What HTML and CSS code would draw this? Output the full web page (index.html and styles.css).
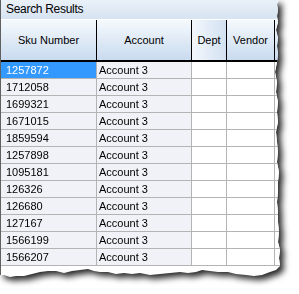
FILE: index.html
```html
<!DOCTYPE html>
<html>
<head>
<meta charset="utf-8">
<link rel="stylesheet" href="styles.css">
</head>
<body>
<div class="shadow">
  <div class="frame">
    <div class="title">Search Results</div>
    <div class="grid">
      <div class="hd">Sku Number</div>
      <div class="hd">Account</div>
      <div class="hd sorted">Dept</div>
      <div class="hd">Vendor</div>
      <div class="hd last"></div>

      <div class="c sku sel">1257872</div><div class="c acc">Account 3</div><div class="c"></div><div class="c"></div><div class="c last"></div>
      <div class="c sku">1712058</div><div class="c acc">Account 3</div><div class="c"></div><div class="c"></div><div class="c last"></div>
      <div class="c sku">1699321</div><div class="c acc">Account 3</div><div class="c"></div><div class="c"></div><div class="c last"></div>
      <div class="c sku">1671015</div><div class="c acc">Account 3</div><div class="c"></div><div class="c"></div><div class="c last"></div>
      <div class="c sku">1859594</div><div class="c acc">Account 3</div><div class="c"></div><div class="c"></div><div class="c last"></div>
      <div class="c sku">1257898</div><div class="c acc">Account 3</div><div class="c"></div><div class="c"></div><div class="c last"></div>
      <div class="c sku">1095181</div><div class="c acc">Account 3</div><div class="c"></div><div class="c"></div><div class="c last"></div>
      <div class="c sku">126326</div><div class="c acc">Account 3</div><div class="c"></div><div class="c"></div><div class="c last"></div>
      <div class="c sku">126680</div><div class="c acc">Account 3</div><div class="c"></div><div class="c"></div><div class="c last"></div>
      <div class="c sku">127167</div><div class="c acc">Account 3</div><div class="c"></div><div class="c"></div><div class="c last"></div>
      <div class="c sku">1566199</div><div class="c acc">Account 3</div><div class="c"></div><div class="c"></div><div class="c last"></div>
      <div class="c sku">1566207</div><div class="c acc">Account 3</div><div class="c"></div><div class="c"></div><div class="c last"></div>
    </div>
  </div>
</div>
</body>
</html>
```

FILE: styles.css
```css
html, body {
  margin: 0;
  padding: 0;
  background: #ffffff;
}
body {
  width: 299px;
  height: 294px;
  overflow: hidden;
  font-family: "Liberation Sans", Arial, sans-serif;
  font-size: 11px;
  color: #000;
}
.shadow {
  width: 286px;
  height: 282px;
  filter: drop-shadow(4px 4px 3px rgba(0,0,0,0.85));
}
.frame {
  width: 286px;
  height: 282px;
  background: #ffffff;
  border-left: 1px solid #606060;
  box-sizing: border-box;
  clip-path: polygon(
    0 0, 279px 0, 277px 4px, 278px 10px, 277px 16px, 278px 22px, 276px 30px,
    278px 38px, 277px 46px, 278px 54px, 277px 62px, 275px 72px, 277px 82px,
    276px 92px, 278px 102px, 277px 112px, 278px 122px, 276px 132px, 277px 142px,
    278px 152px, 277px 162px, 279px 172px, 278px 182px, 278px 192px, 277px 202px,
    278px 212px, 278px 222px, 279px 232px, 278px 242px, 280px 250px, 279px 258px,
    280px 266px, 276px 270px, 270px 272px, 262px 275px, 254px 276px, 246px 275px,
    236px 274px, 228px 272px, 218px 272px, 210px 271px, 202px 270px, 196px 272px,
    188px 273px, 180px 272px, 170px 273px, 160px 274px, 150px 275px, 140px 273px,
    132px 274px, 124px 273px, 116px 274px, 108px 272px, 100px 272px, 94px 271px,
    88px 269px, 80px 270px, 72px 271px, 64px 273px, 56px 271px, 48px 271px,
    40px 272px, 32px 274px, 24px 276px, 16px 276px, 10px 277px, 4px 275px, 0 275px
  );
}
.title {
  height: 19px;
  line-height: 19px;
  padding-left: 5px;
  font-size: 12px;
  letter-spacing: -0.3px;
  background: linear-gradient(#eaf1f9, #d6e3f1);
  border-bottom: 1px solid #ffffff;
}
.grid {
  display: grid;
  grid-template-columns: 96px 95px 35px 48px 12px;
  grid-template-rows: 42px repeat(12, 17px);
}
.hd {
  display: flex;
  align-items: center;
  justify-content: center;
  background: linear-gradient(#f5f9fd, #c9dbef);
  border-right: 1px solid #000;
  border-bottom: 2px solid #000;
}
.hd.sorted {
  background: linear-gradient(90deg, #f3f7fc, #d2e1f1);
}
.c {
  background: #ffffff;
  border-right: 1px solid #b4b4b4;
  border-bottom: 1px solid #b4b4b4;
  line-height: 16px;
  padding-left: 5px;
  white-space: nowrap;
  overflow: hidden;
}
.c.sku, .c.acc {
  background: #f1f2f7;
}
.c.acc {
  padding-left: 2px;
}
.c.sel {
  background: #3399ff;
  color: #ffffff;
}
.last {
  border-right: none;
}
```
